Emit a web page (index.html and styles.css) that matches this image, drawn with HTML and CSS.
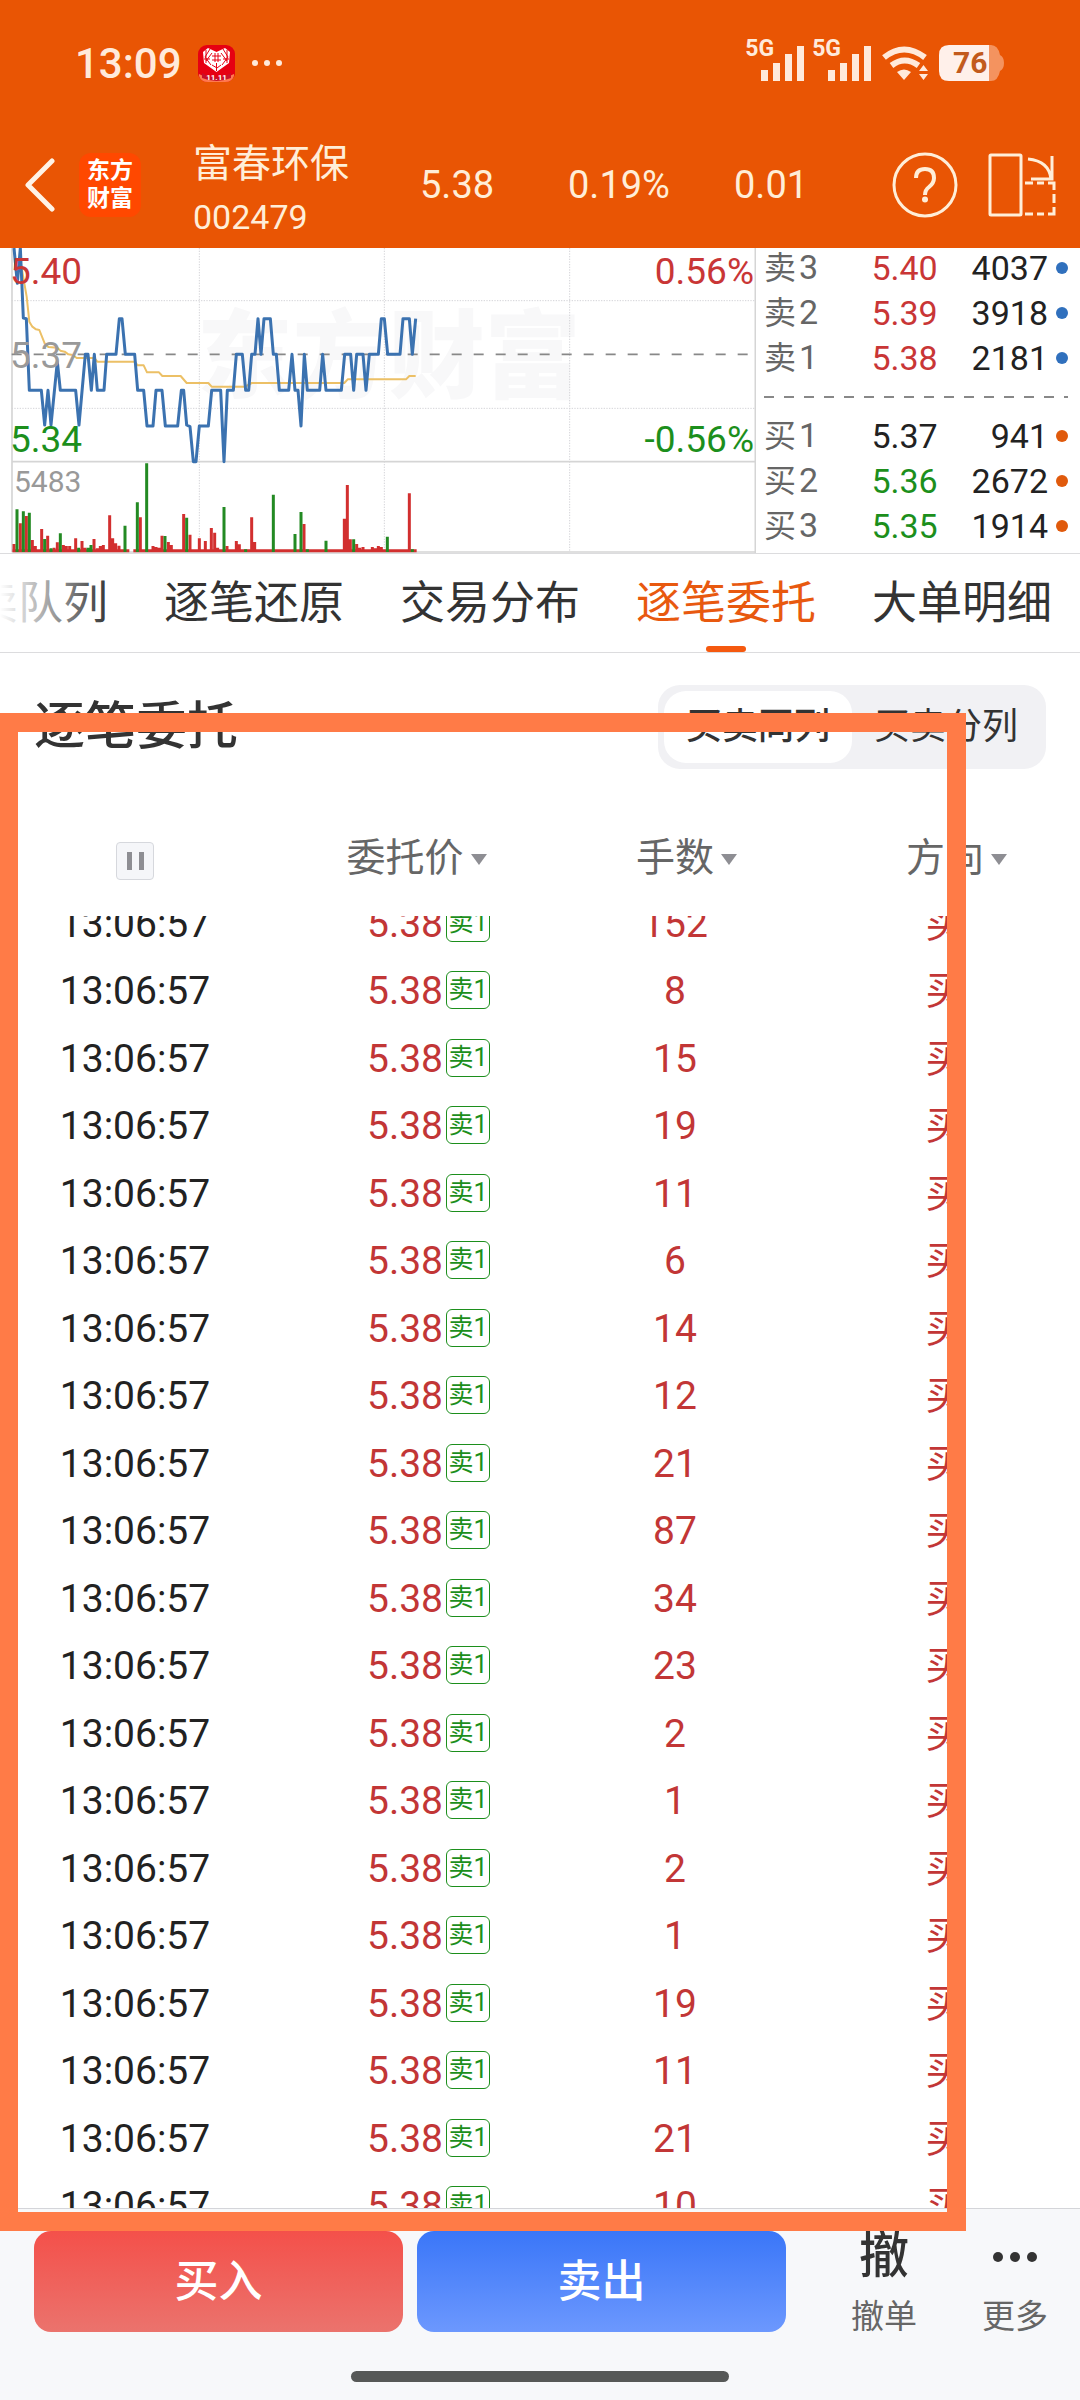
FILE: index.html
```
<!DOCTYPE html>
<html lang="zh-CN">
<head>
<meta charset="utf-8">
<meta name="viewport" content="width=device-width">
<title>富春环保 002479</title>
<link rel="stylesheet" href="styles.css">
</head>

<body>

<header class="top">
  <div class="status">
    <span class="clock">13:09</span>
    <svg class="app-badge" viewBox="0 0 37 37" width="37" height="37">
      <rect width="37" height="37" rx="9" fill="#e60012"/>
      <path d="M1 29q17 9 35 0v2q-2 6-9 6H10q-7 0-9-6z" fill="#ff7a50"/>
      <path d="M4 28q14 9 29 0v5q-14 6-29 0z" fill="#c8102a"/>
      <path d="M18.500 27L6 18 5 7l5-4 8.500 4L27 3l5 4-1 11z" fill="#fff"/>
      <path d="M8 5v13M12 4l-5 8 6 8M29 5v13M25 4l5 8-6 8M14 8l-6 8M23 8l6 8M18.500 18v8M14 20l5 3 4-3M6 14h6M25 14h6" fill="none" stroke="#e60012"/>
      <path d="M14 11h9M14 15h9M17 8v9M20 8v9" stroke="#e60012"/>
      <text x="18.500" y="35" text-anchor="middle" class="badge-text">11.11</text>
    </svg>
    <svg viewBox="0 0 32 8" width="32" height="8" fill="#ffeadb"><circle cx="4" cy="4" r="3"/><circle cx="16" cy="4" r="3"/><circle cx="28" cy="4" r="3"/></svg>

    <div class="signals">
      <div class="signal">
        <span>5G</span>
        <svg viewBox="0 0 44 36" width="44" height="36"><path d="M1 25h7v11H1zM13 18h7v18h-7zM25 9h7v27h-7zM37 1h7v35h-7z"/></svg>
      </div>
      <div class="signal">
        <span>5G</span>
        <svg viewBox="0 0 44 36" width="44" height="36"><path d="M1 25h7v11H1zM13 18h7v18h-7zM25 9h7v27h-7zM37 1h7v35h-7z"/></svg>
      </div>
      <svg class="wifi" viewBox="0 0 48 36" width="48" height="36">
        <path d="M3 12.500q20-16 41 0M10.500 20.500q13-10 27 0" fill="none" stroke="#ffeadb" stroke-width="6"/>
        <path d="M16 27q7-5 14 0l-7 8zM38 26l4.500-6 4.500 6zM38 29h9l-4.500 6z"/>
      </svg>
      <div class="battery">
        <svg viewBox="0 0 66 36" width="66" height="36">
          <path d="M50 0h2q7 0 9 10 4 2 4 8t-4 8q-2 10-9 10h-2z" fill="#f4935f"/>
          <path d="M10 0h40v36H10Q0 36 0 26V10Q0 0 10 0z" fill="#fff0ea"/>
        </svg>
        <span>76</span>
      </div>
    </div>
  </div>

  <nav class="titlebar">
    <a class="back" href="#" aria-label="返回">
      <svg viewBox="0 0 32 54" width="32" height="54"><path d="M28 3L4 27l24 24" fill="none" stroke="#fff3e6" stroke-width="5" stroke-linecap="round" stroke-linejoin="round"/></svg>
    </a>
    <div class="logo">东方<br>财富</div>
    <div class="stock">
      <h1>富春环保</h1>
      <span>002479</span>
    </div>
    <div class="quote">
      <span>5.38</span><span>0.19%</span><span>0.01</span>
    </div>
    <div class="tools">
      <button type="button" aria-label="帮助">
        <svg viewBox="0 0 66 66" width="66" height="66" fill="none" stroke="#ffeed8" stroke-width="3">
          <circle cx="33" cy="33" r="31"/>
          <path d="M24 26q0-9 9-9t9 9q0 5-5 9-4 3-4 8" stroke-width="4"/>
          <circle cx="33" cy="47.500" r="3" fill="#ffeed8" stroke="none"/>
        </svg>
      </button>
      <button type="button" aria-label="横屏">
        <svg viewBox="0 0 68 66" width="68" height="66" fill="none" stroke="#ffeed8" stroke-width="3">
          <rect x="2" y="3" width="31" height="60" rx="1"/>
          <path d="M40 7q21 2 23 20M64 4v23H43"/>
          <path d="M37 31h8M49 31h7M60 31h6v7M66 42v9M66 55v7h-6M56 62h-7M45 62h-8"/>
        </svg>
      </button>
    </div>
  </nav>
</header>

<section class="market">
  <div class="chart">
    <svg viewBox="0 24 2268 915">
      <text x="1166" y="450" text-anchor="middle" class="watermark">东方财富</text>
      <path d="M35 182H2264M35 505H2264M598 24V936M1153 24V936M1709 24V936" stroke="#d4d4d8" stroke-width="3" stroke-dasharray="4 4"/>
      <path d="M36 24V936M35 665H2264M35 936H2264M2266 24V939" fill="none" stroke="#d5d5d5" stroke-width="5"/>
      <path d="M35 343H2264" stroke="#888" stroke-width="5" stroke-dasharray="30 36"/>
      <!-- average price -->
      <path class="line" stroke="#ecc066" stroke-width="6" d="M66 90L80 170 88 245 97 260 108 268 118 270 134 310 145 321 172 323 181 332 194 335 205 343 218 345 230 354 283 354 292 365 404 365 413 376 431 376 441 397 477 397 487 408 542 408 560 429 625 429 635 440 735 440 755 429 1033 429 1043 418 1218 418 1228 408 1247 408"/>
      <!-- price -->
      <path class="line" stroke="#3b72b0" stroke-width="9" d="M42 24L52 130 61 24 70 234 79 236 88 451 124 451 134 555 144 451 153 555 172 365 181 451 227 451 237 555 256 343 264 343 274 451 283 343 292 451 312 451 320 343 348 343 358 236 366 236 376 343 404 343 413 451 431 451 441 558 459 558 468 451 486 451 496 558 533 558 544 451 551 451 560 555 570 560 580 665 588 665 598 558 625 558 635 451 662 451 672 665 682 451 700 451 709 343 727 343 737 451 746 451 755 343 765 343 774 236 783 343 792 236 811 236 820 343 829 343 838 451 866 451 876 343 885 451 894 451 903 558 913 343 922 451 959 451 968 343 978 451 1024 451 1034 343 1052 343 1061 451 1070 343 1089 343 1098 451 1108 343 1135 343 1144 236 1153 236 1163 343 1200 343 1209 236 1228 236 1237 343 1247 236"/>
      <!-- volume -->
      <path stroke="#d22f2f" stroke-width="9" d="M38 932H388M400 932H1250" />
      <path stroke="#d22f2f" stroke-width="9" d="M42 936V912M61 936V850M79 936V828M97 936V900M106 936V918M125 936V867M143 936V887M162 936V923M172 936V907M190 936V915M199 936V918M209 936V918M227 936V895M246 936V903M255 936V923M282 936V897M292 936V925M301 936V918M310 936V915M329 936V826M338 936V895M347 936V910M357 936V917M421 936V832M459 936V918M468 936V921M477 936V923M486 936V887M505 936V906M514 936V915M551 936V822M570 936V884M598 936V895M616 936V903M634 936V864M644 936V878M653 936V923M681 936V918M709 936V903M718 936V913M755 936V832M764 936V906M912 936V852M1033 936V836M1042 936V735M1051 936V898M1070 936V912M1079 936V923M1089 936V921M1117 936V921M1126 936V925M1135 936V918M1144 936V921M1228 936V760"/>
      <path stroke="#238a23" stroke-width="9" d="M51 936V808M70 936V814M88 936V818M134 936V897M153 936V925M181 936V880M236 936V923M264 936V923M273 936V915M375 936V857M412 936V787M440 936V670M495 936V888M560 936V833M672 936V801M737 936V928M820 936V764M885 936V882M903 936V816M922 936V928M978 936V902M1061 936V898M1162 936V890M1237 936V928"/>
    </svg>
    <div class="scale">
      <span class="up">5.40</span><span class="up">0.56%</span>
      <span class="flat">5.37</span><span></span>
      <span class="down">5.34</span><span class="down">-0.56%</span>
    </div>
    <span class="volume">5483</span>
  </div>

  <table class="book">
    <tbody>
      <tr><th>卖<b>3</b></th><td class="up">5.40</td><td>4037</td><td class="dot sell"></td></tr>
      <tr><th>卖<b>2</b></th><td class="up">5.39</td><td>3918</td><td class="dot sell"></td></tr>
      <tr><th>卖<b>1</b></th><td class="up">5.38</td><td>2181</td><td class="dot sell"></td></tr>
    </tbody>
    <tbody>
      <tr class="gap"><td colspan="4"><svg width="100%" height="2"><path d="M0 1H400" stroke="#888" stroke-width="2" stroke-dasharray="10 10"/></svg></td></tr>
    </tbody>
    <tbody>
      <tr><th>买<b>1</b></th><td>5.37</td><td>941</td><td class="dot buy"></td></tr>
      <tr><th>买<b>2</b></th><td class="down">5.36</td><td>2672</td><td class="dot buy"></td></tr>
      <tr><th>买<b>3</b></th><td class="down">5.35</td><td>1914</td><td class="dot buy"></td></tr>
    </tbody>
  </table>
</section>

<nav class="tabs">
  <a href="#">买卖队列</a>
  <a href="#">逐笔还原</a>
  <a href="#">交易分布</a>
  <a href="#" class="active">逐笔委托</a>
  <a href="#">大单明细</a>
</nav>

<main>
  <div class="section-head">
    <h2>逐笔委托</h2>
    <div class="switch">
      <input type="radio" name="layout" id="merged" checked>
      <label for="merged">买卖同列</label>
      <input type="radio" name="layout" id="split">
      <label for="split">买卖分列</label>
    </div>
  </div>

  <table class="orders">
    <thead>
      <tr>
        <th><button type="button" class="pause" aria-label="暂停"></button></th>
        <th><button type="button" class="sort">委托价</button></th>
        <th><button type="button" class="sort">手数</button></th>
        <th><button type="button" class="sort">方向</button></th>
      </tr>
    </thead>
    <tbody>
      <tr><td>13:06:57</td><td><span class="price">5.38<i>卖1</i></span></td><td>152</td><td>买</td></tr>
      <tr><td>13:06:57</td><td><span class="price">5.38<i>卖1</i></span></td><td>8</td><td>买</td></tr>
      <tr><td>13:06:57</td><td><span class="price">5.38<i>卖1</i></span></td><td>15</td><td>买</td></tr>
      <tr><td>13:06:57</td><td><span class="price">5.38<i>卖1</i></span></td><td>19</td><td>买</td></tr>
      <tr><td>13:06:57</td><td><span class="price">5.38<i>卖1</i></span></td><td>11</td><td>买</td></tr>
      <tr><td>13:06:57</td><td><span class="price">5.38<i>卖1</i></span></td><td>6</td><td>买</td></tr>
      <tr><td>13:06:57</td><td><span class="price">5.38<i>卖1</i></span></td><td>14</td><td>买</td></tr>
      <tr><td>13:06:57</td><td><span class="price">5.38<i>卖1</i></span></td><td>12</td><td>买</td></tr>
      <tr><td>13:06:57</td><td><span class="price">5.38<i>卖1</i></span></td><td>21</td><td>买</td></tr>
      <tr><td>13:06:57</td><td><span class="price">5.38<i>卖1</i></span></td><td>87</td><td>买</td></tr>
      <tr><td>13:06:57</td><td><span class="price">5.38<i>卖1</i></span></td><td>34</td><td>买</td></tr>
      <tr><td>13:06:57</td><td><span class="price">5.38<i>卖1</i></span></td><td>23</td><td>买</td></tr>
      <tr><td>13:06:57</td><td><span class="price">5.38<i>卖1</i></span></td><td>2</td><td>买</td></tr>
      <tr><td>13:06:57</td><td><span class="price">5.38<i>卖1</i></span></td><td>1</td><td>买</td></tr>
      <tr><td>13:06:57</td><td><span class="price">5.38<i>卖1</i></span></td><td>2</td><td>买</td></tr>
      <tr><td>13:06:57</td><td><span class="price">5.38<i>卖1</i></span></td><td>1</td><td>买</td></tr>
      <tr><td>13:06:57</td><td><span class="price">5.38<i>卖1</i></span></td><td>19</td><td>买</td></tr>
      <tr><td>13:06:57</td><td><span class="price">5.38<i>卖1</i></span></td><td>11</td><td>买</td></tr>
      <tr><td>13:06:57</td><td><span class="price">5.38<i>卖1</i></span></td><td>21</td><td>买</td></tr>
      <tr><td>13:06:57</td><td><span class="price">5.38<i>卖1</i></span></td><td>10</td><td>买</td></tr>
    </tbody>
  </table>
</main>

<footer>
  <div class="actions">
    <button type="button" class="trade buy-btn">买入</button>
    <button type="button" class="trade sell-btn">卖出</button>
    <a href="#" class="action"><strong>撤</strong>撤单</a>
    <a href="#" class="action">
      <svg viewBox="0 0 44 50" width="44" height="50" fill="#333"><circle cx="5" cy="26" r="5"/><circle cx="22" cy="26" r="5"/><circle cx="39" cy="26" r="5"/></svg>
      更多
    </a>
  </div>
  <div class="home"></div>
</footer>

<div class="highlight"></div>

</body>
</html>
```
FILE: styles.css
```
* { box-sizing: border-box; }

body {
  margin: 0;
  height: 100vh;
  display: flex;
  flex-direction: column;
  position: relative;
  overflow: hidden;
  background: #fff;
  color: #222;
  font-family: Roboto, "Noto Sans CJK SC", sans-serif;
}

h1, h2 { margin: 0; font-weight: 400; }
a { color: inherit; text-decoration: none; }
svg { display: block; }

button {
  padding: 0;
  border: 0;
  background: none;
  color: inherit;
  font: inherit;
}

.up   { color: #c93636; }
.down { color: #1c8f1c; }
.flat { color: #999; }

/* Header */

.top {
  height: 248px;
  background: #e95504;
  color: #ffeed8;
}

.status {
  display: flex;
  align-items: center;
  height: 126px;
  padding: 0 75px;
  color: #ffeadb;
}

.clock {
  margin-right: 16px;
  font-size: 42px;
  font-weight: 500;
}

.app-badge { margin-right: 16px; }
.badge-text { font: bold 8px Roboto, sans-serif; fill: #fff; }

.signals {
  display: flex;
  align-items: center;
  gap: 8px;
  margin-left: auto;
  fill: #ffeadb;
}

.signal {
  display: flex;
  align-items: flex-start;
}

.signal span {
  margin: -8px -14px 0 0;
  font-size: 23px;
  line-height: 24px;
  font-weight: 700;
}

.wifi { margin: 0 2px; }

.battery { position: relative; }

.battery span {
  position: absolute;
  top: 0;
  left: 14px;
  font-size: 30px;
  line-height: 36px;
  font-weight: 700;
  color: #c25a1c;
}

.titlebar {
  display: flex;
  align-items: center;
  height: 118px;
  padding: 0 24px;
}

.back { width: 55px; }

.logo {
  width: 62px;
  padding: 4px 0;
  border-radius: 12px;
  background: #ff4800;
  color: #fff;
  font-size: 23px;
  line-height: 28px;
  font-weight: 700;
  text-align: center;
}

.stock {
  width: 227px;
  padding-top: 7px;
  margin-left: 52px;
  font-size: 34px;
  line-height: 50px;
}

.stock h1 { font-size: 39px; line-height: 56px; }

.quote {
  display: grid;
  grid-template-columns: 148px 166px auto;
  font-size: 38px;
}

.tools {
  display: flex;
  gap: 30px;
  margin-left: auto;
}

/* Intraday chart and order book */

.market {
  display: flex;
  border-bottom: 1px solid #dcdcde;
}

.chart {
  position: relative;
  width: 70%;
}

.chart svg { width: 100%; }
.line { fill: none; stroke-linejoin: round; }

.watermark {
  font: 900 288px "Noto Sans CJK SC", sans-serif;
  fill: #f8f8f9;
}

.scale {
  position: absolute;
  top: 2px;
  left: 10px;
  right: 2px;
  display: grid;
  grid-template-columns: auto auto;
  row-gap: 40px;
  font-size: 37px;
  line-height: 44px;
}

.scale span:nth-child(even) { text-align: right; }

.volume {
  position: absolute;
  top: 216px;
  left: 14px;
  font-size: 30px;
  line-height: 36px;
  color: #999;
}

.book {
  flex: 1;
  align-self: flex-start;
  margin: -3px 12px 0 8px;
  border-collapse: collapse;
  font-size: 34px;
}

.book tr { height: 45px; }
.book .gap { height: 33px; }
.book .gap td { line-height: 0; }
.book td, .book th { padding: 0; line-height: 36px; text-align: right; }
.book th { font-size: 32px; font-weight: 400; text-align: left; color: #666; }
.book b { margin-left: 3px; font-size: 34px; line-height: 32px; font-weight: 400; }

.dot { width: 20px; }

.dot::before {
  content: "";
  display: block;
  width: 12px;
  height: 12px;
  border-radius: 50%;
  margin-left: auto;
}

.sell::before { background: #3070bd; }
.buy::before { background: #e05a0c; }

/* Tabs */

.tabs {
  position: relative;
  display: flex;
  gap: 56px;
  height: 99px;
  padding-right: 28px;
  overflow: hidden;
  justify-content: flex-end;
  border-bottom: 1px solid #dcdcde;
  font-size: 45px;
  line-height: 99px;
  color: #333;
}

.tabs a { flex: none; }

.tabs::before {
  content: "";
  position: absolute;
  left: 0;
  width: 110px;
  height: 96px;
  background: linear-gradient(to right, #fff, rgba(255, 255, 255, 0));
}

.tabs .active { position: relative; color: #e8590f; }

.active::after {
  content: "";
  position: absolute;
  bottom: 0;
  left: 50%;
  width: 40px;
  height: 6px;
  margin-left: -20px;
  border-radius: 3px;
  background: #f5590f;
}

/* Order list */

main {
  flex: 1;
  min-height: 0;
  display: flex;
  flex-direction: column;
}

.section-head {
  display: flex;
  align-items: center;
  justify-content: space-between;
  height: 147px;
  padding: 0 34px;
}

h2 {
  font-size: 51px;
  line-height: 60px;
  font-weight: 500;
  color: #333;
}

.switch {
  display: flex;
  padding: 6px;
  border-radius: 22px;
  background: #f1f1f4;
  font-size: 36px;
  line-height: 72px;
  color: #333;
}

.switch input { position: absolute; opacity: 0; }
.switch label { padding: 0 22px; border-radius: 22px; }
.switch :checked + label { background: #fff; font-weight: 500; }

.orders {
  flex: 1;
  min-height: 0;
  display: flex;
  flex-direction: column;
  font-size: 39px;
  line-height: 46px;
  text-align: center;
}

.orders tr {
  display: grid;
  grid-template-columns: repeat(4, 1fr);
  align-items: center;
}

.orders td, .orders th { padding: 0; font-weight: 400; }
.orders thead tr { height: 116px; color: #666; }

.orders tbody {
  flex: 1;
  display: block;
  min-height: 0;
  overflow: hidden;
}

.orders tbody tr { height: 67px; }
.orders tbody tr:nth-child(even) { height: 68px; }
.orders tbody tr:first-child { margin-top: -26px; }
.orders tbody td + td { color: #c23636; }

.pause {
  width: 38px;
  height: 38px;
  border: 1px solid #d6d8dd;
  border-radius: 4px;
  background: #f5f6f9;
  vertical-align: middle;
}

.pause::before {
  content: "";
  display: block;
  width: 7px;
  height: 18px;
  margin: auto;
  border: solid #8e8e93;
  border-width: 0 5px;
}

.sort, .price { position: relative; }

.sort::after {
  content: "";
  position: absolute;
  left: 100%;
  top: 50%;
  margin: -4px 0 0 7px;
  border: 8px solid transparent;
  border-top: 11px solid #8e8e93;
  border-bottom: 0;
}

.price i {
  position: absolute;
  left: 100%;
  top: 3px;
  width: 44px;
  margin-left: 3px;
  border: 1px solid #1c8f1c;
  border-radius: 6px;
  color: #1c8f1c;
  font-size: 25px;
  font-style: normal;
  line-height: 36px;
  white-space: nowrap;
}

/* Bottom bar */

footer {
  height: 192px;
  padding-top: 22px;
  border-top: 1px solid #d4d5d9;
  background: #f7f8fa;
}

.actions {
  display: flex;
  gap: 14px;
  padding: 0 15px 0 34px;
}

.trade {
  flex: 1;
  height: 101px;
  border-radius: 17px;
  color: #fff;
  font-size: 44px;
  line-height: 50px;
  font-weight: 500;
}

.buy-btn { background: linear-gradient(#f4504a, #eb736d); }
.sell-btn { background: linear-gradient(#3a76f8, #6c98fe); }

.action {
  display: flex;
  flex-direction: column;
  align-items: center;
  gap: 11px;
  width: 100px;
  font-size: 33px;
  line-height: 50px;
  color: #666;
}

.action:nth-child(3) { margin: 0 17px 0 34px; }
.action strong { font-size: 50px; font-weight: 500; color: #333; }
.action svg { flex: none; }

.home {
  width: 35%;
  height: 11px;
  margin: 29px auto 0;
  border-radius: 6px;
  background: #565857;
}

/* Marker frame over the order list */

.highlight {
  position: absolute;
  top: 713px;
  bottom: 169px;
  left: -1px;
  right: 114px;
  border: 19px solid #ff7b47;
  pointer-events: none;
}
```
